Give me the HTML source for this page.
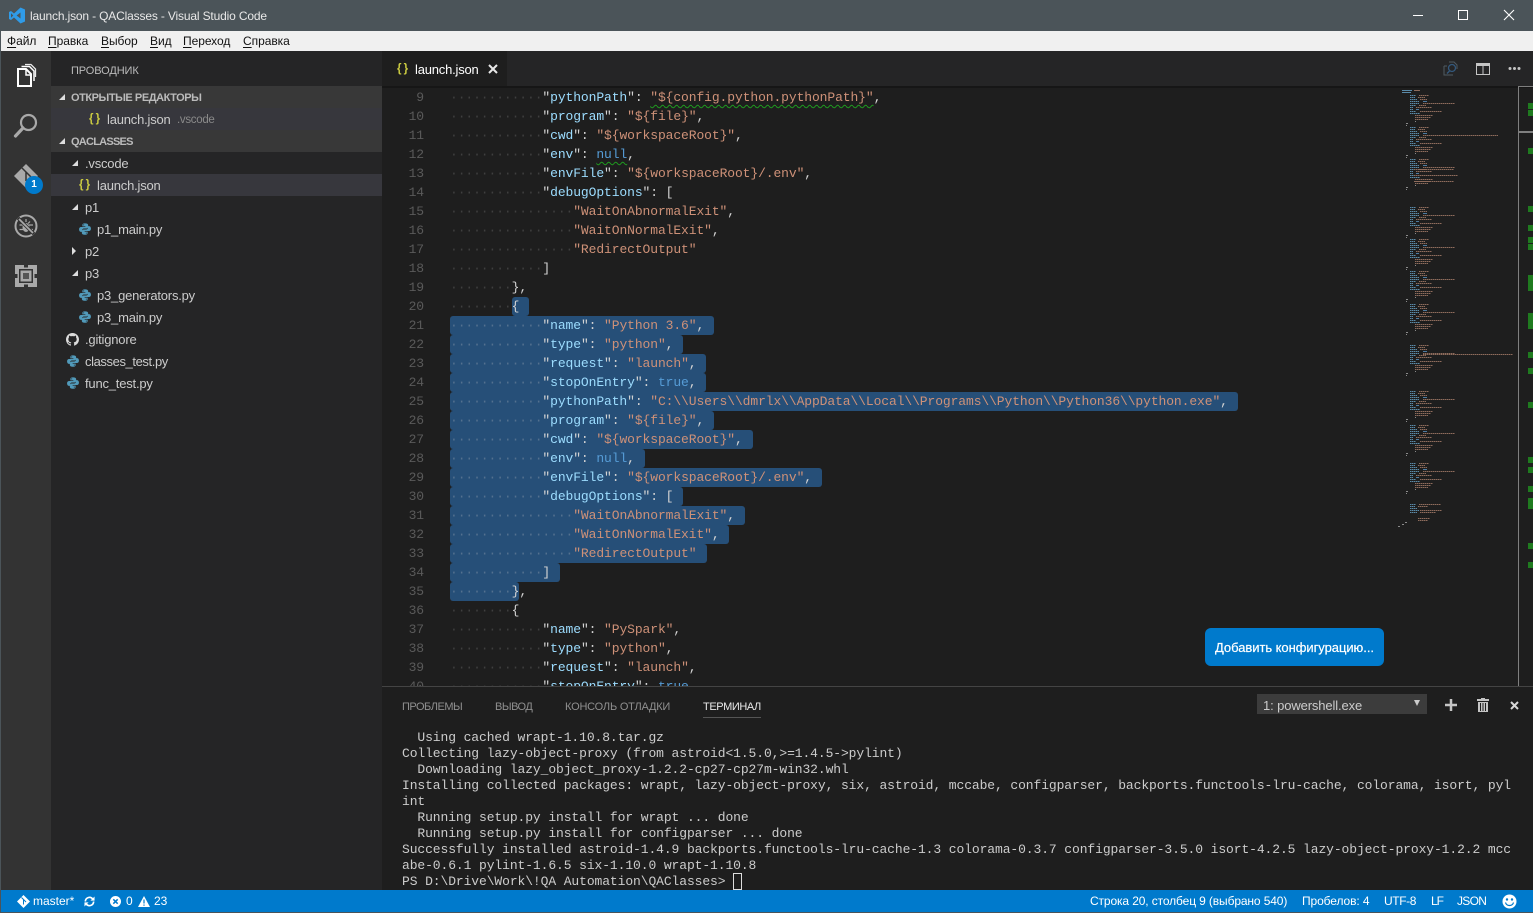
<!DOCTYPE html>
<html><head><meta charset="utf-8"><title>launch.json - QAClasses - Visual Studio Code</title>
<style>
html,body{margin:0;padding:0;width:1533px;height:913px;overflow:hidden;background:#4b5459;font-family:"Liberation Sans","Noto Sans CJK SC",sans-serif}
.a{position:absolute}
.t{position:absolute;white-space:pre;line-height:22px;height:22px}
.code,.term,.nums{font-family:"Liberation Mono","DejaVu Sans Mono",monospace;font-size:13px;letter-spacing:-.1px}
.code div{height:19px;line-height:19px;white-space:pre}
.nums div{height:19px;line-height:19px;text-align:right;color:#5a5a5a}
.term div{height:16px;line-height:16px;white-space:pre}
i{font-style:normal;color:#3f3f3f}
.s i{color:#54718f}
b{font-weight:normal}
.k{color:#9cdcfe}.v{color:#ce9178}.n{color:#569cd6}
.w{text-decoration:underline wavy #1f9a1f 1px;text-underline-offset:3px}
.sel{position:absolute;background:#264f78;height:19px;left:450px;border-radius:3px}
.row{font-size:13px;color:#cccccc;letter-spacing:-.2px}
.sec{font-size:11px;font-weight:bold;color:#bbbbbb}
.tab{font-size:11px;color:#8f8f8f;line-height:16px;height:16px;position:absolute;white-space:pre;top:699px}
.menu{position:absolute;top:33px;font-size:12px;line-height:16px;color:#111;letter-spacing:-.05px}
.menu u{text-underline-offset:2px}
.st{position:absolute;top:890px;height:22px;line-height:22px;font-size:12px;color:#fff;white-space:pre}
.jb{position:absolute;color:#cbcb41;font-weight:bold;font-size:11.500px;line-height:22px;height:22px;white-space:pre;letter-spacing:-.5px}
</style></head><body>
<svg width="0" height="0" style="position:absolute"><defs>
<symbol id="py" viewBox="0 0 16 16"><path fill="#519aba" d="M8 1.500C5.600 1.500 5 2.400 5 3.500V5h3.400v.7H3.500C2.200 5.700 1.200 6.700 1.200 8.400c0 1.800 1 2.900 2.300 2.900h1.100V9.600c0-1.200 1-2.200 2.200-2.200h3c1 0 1.800-.8 1.800-1.800V3.500c0-1.100-1-2-3.600-2zM6.500 2.700a.6.6 0 1 1 0 1.200.6.6 0 0 1 0-1.200z"/><path fill="#519aba" d="M8 14.500c2.400 0 3-.9 3-2V11H7.600v-.7h4.900c1.300 0 2.300-1 2.300-2.700 0-1.800-1-2.900-2.300-2.900h-1.100v1.700c0 1.200-1 2.200-2.200 2.200h-3c-1 0-1.800.8-1.800 1.800v2.100c0 1.100 1 2 3.600 2zm1.500-1.200a.6.6 0 1 1 0-1.200.6.6 0 0 1 0 1.200z"/></symbol>
<g id="mb">
<path fill="none" stroke="#5a8aa8" stroke-width="1" stroke-dasharray="1.500 .5" d="M0 .5h6M0 2.500h5M0 4.500h7M0 6.500h9M0 8.500h9M0 10.500h6M0 12.500h3M0 14.500h3M0 16.500h6M0 18.500h10"/>
<path fill="none" stroke="#8f6c5c" stroke-width="1" stroke-dasharray="1.500 .5" d="M9 .5h10M8 2.500h7M10 4.500h7M13 8.500h32M9 10.500h7M6 12.500h16M10 16.500h22M5 20.500h18M5 22.500h16M5 24.500h13"/>
<path fill="none" stroke="#4d7aa0" d="M13 6.500h4M6 14.500h3"/>
<path fill="none" stroke="#8a8a8a" d="M5 26.500h1M-4 28.500h2M-4 30.500h1"/>
</g>
</defs></svg>

<!-- title bar -->
<div class="a" style="left:0;top:0;width:1533px;height:31px;background:#4b5459"></div>
<svg class="a" style="left:9px;top:7px" width="16" height="17" viewBox="0 0 16 17"><path fill="#2f9be8" d="M11.500 0.500L16 2.500v12l-4.500 2L5 10.500l-3 2.500-2-1V5l2-1 3 2.500zM2 6.200v4.600l2.300-2.300zM7.600 8.500l3.900 3V5.500z"/></svg>
<div class="t" style="left:30px;top:5px;font-size:12px;letter-spacing:-.16px;color:#e8e8e8">launch.json - QAClasses - Visual Studio Code</div>
<svg class="a" style="left:1410px;top:8px" width="110" height="16" viewBox="0 0 110 16" fill="none" stroke="#fff" stroke-width="1"><path d="M3 7.500h10"/><path d="M48.500 2.500h9v9h-9z"/><path d="M94 2l10 10M104 2L94 12" stroke-width="1.100"/></svg>

<!-- menu -->
<div class="a" style="left:1px;top:31px;width:1532px;height:20px;background:#f0f0f0"></div>
<div class="menu" style="left:7px"><u>Ф</u>айл</div>
<div class="menu" style="left:48px"><u>П</u>равка</div>
<div class="menu" style="left:101px"><u>В</u>ыбор</div>
<div class="menu" style="left:150px"><u>В</u>ид</div>
<div class="menu" style="left:183px"><u>П</u>ереход</div>
<div class="menu" style="left:243px"><u>С</u>правка</div>

<!-- activity bar -->
<div class="a" style="left:1px;top:51px;width:50px;height:839px;background:#333333"></div>
<svg class="a" style="left:14px;top:62px" width="24" height="28" viewBox="0 0 24 28" fill="none" stroke="#fff"><path d="M4 7h8l5 5v12H4z" stroke-width="2"/><path d="M12 7v6h5" stroke-width="1.500"/><path d="M7.500 4.500h8l4.500 4.500v10" stroke-width="1.500"/><path d="M11 2.500h6l4.500 4.500v8" stroke-width="1.300" stroke-opacity=".9"/></svg>
<svg class="a" style="left:13px;top:112px" width="26" height="28" viewBox="0 0 26 28" fill="none" stroke="#a9a9a9"><circle cx="15.500" cy="10.500" r="7.500" stroke-width="2.200"/><path d="M10 16l-7.500 8" stroke-width="3.200" stroke-linecap="round"/></svg>
<svg class="a" style="left:13px;top:163px" width="28" height="28" viewBox="0 0 28 28"><path fill="#a9a9a9" d="M13 1l12 12-12 12L1 13z"/><path fill="none" stroke="#333" stroke-width="1.500" d="M9 5l4 4v9M13 9l5 5"/></svg>
<div class="a" style="left:25px;top:176px;width:18px;height:18px;border-radius:50%;background:#007acc;color:#fff;font-size:10px;font-weight:bold;line-height:18px;text-align:center">1</div>
<svg class="a" style="left:14px;top:214px" width="24" height="24" viewBox="0 0 24 24" fill="none" stroke="#a9a9a9"><circle cx="12" cy="12" r="10.500" stroke-width="2"/><ellipse cx="12" cy="13.500" rx="3.500" ry="4.500" fill="#a9a9a9" stroke="none"/><path d="M12 5v3M5.500 11H9M15 11h4M5.500 15.500H9M15 15.500h4M8 7.500l2 2M16 7.500l-2 2" stroke-width="1.200"/><path d="M4 4l16 16" stroke="#333" stroke-width="3.500"/><path d="M5 5l14 14" stroke-width="1.800"/></svg>
<svg class="a" style="left:15px;top:265px" width="22" height="22" viewBox="0 0 22 22"><path fill="#a9a9a9" d="M0 0h22v22H0z"/><path fill="#333" d="M9 0h4v2.500H9zM19.500 9H22v4h-2.500zM9 19.500h4V22H9zM0 9h2.500v4H0z"/><path fill="none" stroke="#333" stroke-width="1.500" d="M4.750 4.750h12.500v12.500H4.750z"/><path fill="#555" d="M8 8h6v6H8z"/></svg>

<!-- sidebar -->
<div class="a" style="left:51px;top:51px;width:331px;height:839px;background:#252526"></div>
<div class="t" style="left:71px;top:60px;font-size:11px;letter-spacing:-.1px;color:#bbbbbb">ПРОВОДНИК</div>
<div class="a" style="left:51px;top:86px;width:331px;height:22px;background:#383838"></div>
<div class="a" style="left:59px;top:94px;border-left:6px solid transparent;border-bottom:6px solid #ddd;width:0;height:0"></div>
<div class="t sec" style="left:71px;top:87px;letter-spacing:-.45px">ОТКРЫТЫЕ РЕДАКТОРЫ</div>
<div class="a" style="left:51px;top:108px;width:331px;height:22px;background:#37373d"></div>
<div class="jb" style="left:89px;top:108px">{ }</div>
<div class="t row" style="left:107px;top:109px">launch.json</div>
<div class="t" style="left:177px;top:109px;font-size:11.500px;letter-spacing:-.3px;color:#8a8a8a">.vscode</div>
<div class="a" style="left:51px;top:130px;width:331px;height:22px;background:#383838"></div>
<div class="a" style="left:59px;top:138px;border-left:6px solid transparent;border-bottom:6px solid #ddd;width:0;height:0"></div>
<div class="t sec" style="left:71px;top:131px;letter-spacing:-.75px">QACLASSES</div>

<div class="a" style="left:72px;top:160px;border-left:6px solid transparent;border-bottom:6px solid #ddd;width:0;height:0"></div>
<div class="t row" style="left:85px;top:153px">.vscode</div>
<div class="a" style="left:51px;top:174px;width:331px;height:22px;background:#37373d"></div>
<div class="jb" style="left:79px;top:174px">{ }</div>
<div class="t row" style="left:97px;top:175px">launch.json</div>
<div class="a" style="left:72px;top:204px;border-left:6px solid transparent;border-bottom:6px solid #ddd;width:0;height:0"></div>
<div class="t row" style="left:85px;top:197px">p1</div>
<svg class="a" style="left:78px;top:222px" width="14" height="14"><use href="#py" width="14" height="14"/></svg>
<div class="t row" style="left:97px;top:219px">p1_main.py</div>
<div class="a" style="left:72px;top:247px;border-left:4px solid #ddd;border-top:4px solid transparent;border-bottom:4px solid transparent;width:0;height:0"></div>
<div class="t row" style="left:85px;top:241px">p2</div>
<div class="a" style="left:72px;top:270px;border-left:6px solid transparent;border-bottom:6px solid #ddd;width:0;height:0"></div>
<div class="t row" style="left:85px;top:263px">p3</div>
<svg class="a" style="left:78px;top:288px" width="14" height="14"><use href="#py" width="14" height="14"/></svg>
<div class="t row" style="left:97px;top:285px">p3_generators.py</div>
<svg class="a" style="left:78px;top:310px" width="14" height="14"><use href="#py" width="14" height="14"/></svg>
<div class="t row" style="left:97px;top:307px">p3_main.py</div>
<svg class="a" style="left:66px;top:333px" width="13" height="13" viewBox="0 0 16 16"><path fill="#dcdcdc" d="M8 0C3.580 0 0 3.580 0 8c0 3.540 2.290 6.530 5.470 7.590.4.070.55-.17.55-.38 0-.19-.01-.82-.01-1.490-2.010.37-2.530-.49-2.690-.94-.09-.23-.48-.94-.82-1.130-.28-.15-.68-.52-.01-.53.630-.01 1.080.58 1.230.82.720 1.210 1.870.87 2.330.66.070-.52.28-.87.51-1.070-1.780-.2-3.640-.89-3.640-3.950 0-.87.31-1.590.82-2.150-.08-.2-.36-1.020.08-2.120 0 0 .67-.21 2.200.82.640-.18 1.320-.27 2-.27.680 0 1.360.09 2 .27 1.530-1.040 2.200-.82 2.200-.82.440 1.100.16 1.920.08 2.120.51.56.82 1.270.82 2.150 0 3.070-1.870 3.750-3.650 3.950.29.25.54.73.54 1.480 0 1.070-.01 1.930-.01 2.200 0 .21.15.46.55.38A8.013 8.013 0 0 0 16 8c0-4.420-3.580-8-8-8z"/></svg>
<div class="t row" style="left:85px;top:329px">.gitignore</div>
<svg class="a" style="left:66px;top:354px" width="14" height="14"><use href="#py" width="14" height="14"/></svg>
<div class="t row" style="left:85px;top:351px;letter-spacing:-.4px">classes_test.py</div>
<svg class="a" style="left:66px;top:376px" width="14" height="14"><use href="#py" width="14" height="14"/></svg>
<div class="t row" style="left:85px;top:373px">func_test.py</div>

<!-- editor -->
<div class="a" style="left:382px;top:51px;width:1151px;height:839px;background:#1e1e1e"></div>
<div class="a" style="left:382px;top:51px;width:1151px;height:35px;background:#252526"></div>
<div class="a" style="left:382px;top:51px;width:125px;height:35px;background:#1e1e1e"></div>
<div class="jb" style="left:397px;top:58px">{ }</div>
<div class="t" style="left:415px;top:59px;font-size:13px;letter-spacing:-.2px;color:#fff">launch.json</div>
<svg class="a" style="left:488px;top:64px" width="10" height="10" viewBox="0 0 10 10"><path d="M1 1l8 8M9 1L1 9" stroke="#e8e8e8" stroke-width="2"/></svg>
<svg class="a" style="left:1443px;top:61px" width="16" height="16" viewBox="0 0 16 16" fill="none" stroke="#4f5a62"><path d="M6 1h5l3 3v4M1 5h3M1 5v9h9"/><circle cx="9" cy="7" r="3.500" stroke="#33587c" stroke-width="1.300"/><path d="M6.500 10l-2.500 2.500" stroke="#33587c" stroke-width="1.300"/></svg>
<svg class="a" style="left:1476px;top:63px" width="14" height="12" viewBox="0 0 14 12"><path fill="#c5c5c5" d="M0 0h14v12H0z"/><path fill="#252526" d="M1 3h5.500v8H1zM7.500 3H13v8H7.500z"/></svg>
<svg class="a" style="left:1508px;top:66px" width="13" height="5"><circle cx="2" cy="2.500" r="1.500" fill="#c5c5c5"/><circle cx="6.500" cy="2.500" r="1.500" fill="#c5c5c5"/><circle cx="11" cy="2.500" r="1.500" fill="#c5c5c5"/></svg>
<div class="a" style="left:382px;top:86px;width:1151px;height:2px;background:#161616"></div>

<div class="a" style="left:382px;top:88px;width:1151px;height:598px;overflow:hidden">
<div class="a nums" style="left:0;top:0;width:42px">
<div>9</div><div>10</div><div>11</div><div>12</div><div>13</div><div>14</div><div>15</div><div>16</div><div>17</div><div>18</div><div>19</div><div>20</div><div>21</div><div>22</div><div>23</div><div>24</div><div>25</div><div>26</div><div>27</div><div>28</div><div>29</div><div>30</div><div>31</div><div>32</div><div>33</div><div>34</div><div>35</div><div>36</div><div>37</div><div>38</div><div>39</div><div>40</div>
</div>
</div>

<div class="a" style="left:0;top:0;width:1533px;height:686px;overflow:hidden">
<div class="sel" style="top:297px;left:512px;width:17px"></div>
<div class="sel" style="top:316px;width:264px"></div>
<div class="sel" style="top:335px;width:233px"></div>
<div class="sel" style="top:354px;width:256px"></div>
<div class="sel" style="top:373px;width:256px"></div>
<div class="sel" style="top:392px;width:788px"></div>
<div class="sel" style="top:411px;width:264px"></div>
<div class="sel" style="top:430px;width:303px"></div>
<div class="sel" style="top:449px;width:195px"></div>
<div class="sel" style="top:468px;width:372px"></div>
<div class="sel" style="top:487px;width:233px"></div>
<div class="sel" style="top:506px;width:295px"></div>
<div class="sel" style="top:525px;width:279px"></div>
<div class="sel" style="top:544px;width:257px"></div>
<div class="sel" style="top:563px;width:110px"></div>
<div class="sel" style="top:582px;width:69px"></div>

<div class="a code" style="left:450px;top:88px;color:#d4d4d4;width:1000px">
<div><i>············</i>"<b class="k">pythonPath</b>": <b class="v w">"${config.python.pythonPath}"</b>,</div>
<div><i>············</i>"<b class="k">program</b>": <b class="v">"${file}"</b>,</div>
<div><i>············</i>"<b class="k">cwd</b>": <b class="v">"${workspaceRoot}"</b>,</div>
<div><i>············</i>"<b class="k">env</b>": <b class="n w">null</b>,</div>
<div><i>············</i>"<b class="k">envFile</b>": <b class="v">"${workspaceRoot}/.env"</b>,</div>
<div><i>············</i>"<b class="k">debugOptions</b>": [</div>
<div><i>················</i><b class="v">"WaitOnAbnormalExit"</b>,</div>
<div><i>················</i><b class="v">"WaitOnNormalExit"</b>,</div>
<div><i>················</i><b class="v">"RedirectOutput"</b></div>
<div><i>············</i>]</div>
<div><i>········</i>},</div>
<div><i>········</i>{</div>
<div class="s"><i>············</i>"<b class="k">name</b>": <b class="v">"Python 3.6"</b>,</div>
<div class="s"><i>············</i>"<b class="k">type</b>": <b class="v">"python"</b>,</div>
<div class="s"><i>············</i>"<b class="k">request</b>": <b class="v">"launch"</b>,</div>
<div class="s"><i>············</i>"<b class="k">stopOnEntry</b>": <b class="n">true</b>,</div>
<div class="s"><i>············</i>"<b class="k">pythonPath</b>": <b class="v">"C:\\Users\\dmrlx\\AppData\\Local\\Programs\\Python\\Python36\\python.exe"</b>,</div>
<div class="s"><i>············</i>"<b class="k">program</b>": <b class="v">"${file}"</b>,</div>
<div class="s"><i>············</i>"<b class="k">cwd</b>": <b class="v">"${workspaceRoot}"</b>,</div>
<div class="s"><i>············</i>"<b class="k">env</b>": <b class="n">null</b>,</div>
<div class="s"><i>············</i>"<b class="k">envFile</b>": <b class="v">"${workspaceRoot}/.env"</b>,</div>
<div class="s"><i>············</i>"<b class="k">debugOptions</b>": [</div>
<div class="s"><i>················</i><b class="v">"WaitOnAbnormalExit"</b>,</div>
<div class="s"><i>················</i><b class="v">"WaitOnNormalExit"</b>,</div>
<div class="s"><i>················</i><b class="v">"RedirectOutput"</b></div>
<div class="s"><i>············</i>]</div>
<div class="s"><i>········</i>},</div>
<div><i>········</i>{</div>
<div><i>············</i>"<b class="k">name</b>": <b class="v">"PySpark"</b>,</div>
<div><i>············</i>"<b class="k">type</b>": <b class="v">"python"</b>,</div>
<div><i>············</i>"<b class="k">request</b>": <b class="v">"launch"</b>,</div>
<div><i>············</i>"<b class="k">stopOnEntry</b>": <b class="n">true</b>,</div>
</div>
</div>

<!-- minimap -->
<svg class="a" style="left:1398px;top:86px" width="135" height="600" viewBox="1398 86 135 600">
<path fill="none" stroke="#5a8aa8" d="M1402 90.500h10M1402 92.500h9"/><path fill="none" stroke="#8f6c5c" d="M1414 90.500h6"/>
<use href="#mb" x="1410" y="95"/>
<use href="#mb" x="1410" y="127"/>
<use href="#mb" x="1410" y="159"/>
<path fill="none" stroke="#8f6c5c" stroke-dasharray="1.500 .5" d="M1423 135.500h75M1414 169.500h40M1414 175.500h44M1414 181.500h40"/>
<use href="#mb" x="1410" y="207"/>
<use href="#mb" x="1410" y="239"/>
<use href="#mb" x="1410" y="271"/>
<use href="#mb" x="1410" y="304"/>
<use href="#mb" x="1410" y="345"/>
<path fill="none" stroke="#8f6c5c" stroke-dasharray="1.500 .5" d="M1423 354.500h90"/>
<use href="#mb" x="1410" y="391"/>
<use href="#mb" x="1410" y="425"/>
<use href="#mb" x="1410" y="463"/>
<path fill="none" stroke="#5a8aa8" stroke-dasharray="1.500 .5" d="M1410 504.500h6M1410 506.500h5M1410 508.500h7M1410 510.500h9M1410 512.500h7"/>
<path fill="none" stroke="#8f6c5c" stroke-dasharray="1.500 .5" d="M1419 504.500h22M1418 506.500h10M1420 510.500h22M1420 512.500h16M1418 518.500h12M1418 520.500h10"/>
<path fill="none" stroke="#8a8a8a" d="M1405 522.500h2M1402 524.500h2M1398 526.500h2"/>
<path fill="#1f7a1f" d="M1528 103h5v6h-5zM1528 110h5v6h-5zM1528 148h5v6h-5zM1528 206h5v6h-5zM1528 225h5v6h-5zM1528 237h5v6h-5zM1528 244h5v6h-5zM1528 275h5v16h-5zM1528 313h5v16h-5zM1528 352h5v6h-5zM1528 368h5v6h-5zM1528 402h5v6h-5zM1528 457h5v6h-5zM1528 467h5v6h-5zM1528 486h5v6h-5zM1528 498h5v11h-5zM1528 543h5v6h-5zM1528 562h5v6h-5z"/>
<path fill="#7f7f7f" d="M1518 86h1v600h-1zM1518 86h15v1h-15zM1518 131h15v2h-15z"/>
</svg>

<!-- config button -->
<div class="a" style="left:1205px;top:628px;width:179px;height:38px;border-radius:6px;background:#007acc;color:#fff;font-size:13px;letter-spacing:-.05px;line-height:39px;text-align:center;white-space:pre;-webkit-text-stroke:.2px #fff">Добавить конфигурацию...</div>

<!-- panel -->
<div class="a" style="left:382px;top:686px;width:1151px;height:204px;background:#1e1e1e;border-top:1px solid #444;box-sizing:border-box"></div>
<div class="tab" style="left:402px;letter-spacing:-.5px">ПРОБЛЕМЫ</div>
<div class="tab" style="left:495px;letter-spacing:-.5px">ВЫВОД</div>
<div class="tab" style="left:565px;letter-spacing:-.2px">КОНСОЛЬ ОТЛАДКИ</div>
<div class="tab" style="left:703px;letter-spacing:-.4px;color:#e7e7e7">ТЕРМИНАЛ</div>
<div class="a" style="left:703px;top:717px;width:58px;height:1px;background:#555"></div>
<div class="a" style="left:1257px;top:694px;width:170px;height:20px;background:#3c3c3c"></div>
<div class="t" style="left:1263px;top:695px;height:22px;font-size:13px;letter-spacing:-.12px;color:#ccc">1: powershell.exe</div>
<div class="a" style="left:1414px;top:700px;border-top:6px solid #ccc;border-left:3px solid transparent;border-right:3px solid transparent;width:0;height:0"></div>
<svg class="a" style="left:1445px;top:699px" width="12" height="12"><path d="M6 0v12M0 6h12" stroke="#c5c5c5" stroke-width="2.500"/></svg>
<svg class="a" style="left:1477px;top:698px" width="12" height="14" viewBox="0 0 12 14"><path fill="#c5c5c5" d="M4 0h4v1h4v2H0V1h4zM1 4h10v10H1z"/><path stroke="#1e1e1e" d="M3.500 5v8M6 5v8M8.500 5v8"/></svg>
<svg class="a" style="left:1510px;top:701px" width="9" height="9"><path d="M1 1l7 7M8 1L1 8" stroke="#d8d8d8" stroke-width="2"/></svg>

<div class="a term" style="left:402px;top:730px;color:#cccccc;width:1125px">
<div>  Using cached wrapt-1.10.8.tar.gz</div>
<div>Collecting lazy-object-proxy (from astroid&lt;1.5.0,&gt;=1.4.5-&gt;pylint)</div>
<div>  Downloading lazy_object_proxy-1.2.2-cp27-cp27m-win32.whl</div>
<div>Installing collected packages: wrapt, lazy-object-proxy, six, astroid, mccabe, configparser, backports.functools-lru-cache, colorama, isort, pyl</div>
<div>int</div>
<div>  Running setup.py install for wrapt ... done</div>
<div>  Running setup.py install for configparser ... done</div>
<div>Successfully installed astroid-1.4.9 backports.functools-lru-cache-1.3 colorama-0.3.7 configparser-3.5.0 isort-4.2.5 lazy-object-proxy-1.2.2 mcc</div>
<div>abe-0.6.1 pylint-1.6.5 six-1.10.0 wrapt-1.10.8</div>
<div>PS D:\Drive\Work\!QA Automation\QAClasses&gt; </div>
</div>
<div class="a" style="left:733px;top:873px;width:7px;height:15px;border:1px solid #ddd"></div>

<!-- status bar -->
<div class="a" style="left:1px;top:890px;width:1532px;height:22px;background:#007acc"></div>
<svg class="a" style="left:17px;top:895px" width="13" height="13" viewBox="0 0 13 13"><path fill="#fff" d="M6.500 0L13 6.500 6.500 13 0 6.500z"/><path stroke="#007acc" fill="none" d="M4.500 2.500l2 2v5M6.500 4.500l2.500 2.500"/></svg>
<div class="st" style="left:33px">master*</div>
<svg class="a" style="left:84px;top:896px" width="11" height="11" viewBox="0 0 12 12" fill="none" stroke="#fff" stroke-width="1.800"><path d="M1.500 6a4.500 4.500 0 0 1 8-2.800M10.500 6a4.500 4.500 0 0 1-8 2.800"/><path fill="#fff" stroke="none" d="M11.500 .5v4.500H7zM.5 11.500V7H5z"/></svg>
<svg class="a" style="left:110px;top:896px" width="11" height="11" viewBox="0 0 11 11"><circle cx="5.500" cy="5.500" r="5.500" fill="#fff"/><path d="M3.300 3.300l4.400 4.400M7.700 3.300L3.300 7.700" stroke="#007acc" stroke-width="1.500"/></svg>
<div class="st" style="left:126px">0</div>
<svg class="a" style="left:138px;top:896px" width="12" height="11" viewBox="0 0 12 11"><path fill="#fff" d="M6 0l6 11H0z"/><path stroke="#007acc" stroke-width="1.200" d="M6 3.500v4M6 8.500v1.300"/></svg>
<div class="st" style="left:154px">23</div>
<div class="st" style="left:1090px;letter-spacing:-.12px">Строка 20, столбец 9 (выбрано 540)</div>
<div class="st" style="left:1302px;letter-spacing:-.1px">Пробелов: 4</div>
<div class="st" style="left:1384px;letter-spacing:-.4px">UTF-8</div>
<div class="st" style="left:1431px;letter-spacing:-1px">LF</div>
<div class="st" style="left:1457px;letter-spacing:-.7px">JSON</div>
<svg class="a" style="left:1502px;top:894px" width="15" height="15" viewBox="0 0 15 15"><circle cx="7.500" cy="7.500" r="7" fill="#fff"/><circle cx="5" cy="5.500" r="1.200" fill="#007acc"/><circle cx="10" cy="5.500" r="1.200" fill="#007acc"/><path d="M3.500 8.500c1 4 7 4 8 0" fill="none" stroke="#007acc" stroke-width="1.200"/></svg>
</body></html>
